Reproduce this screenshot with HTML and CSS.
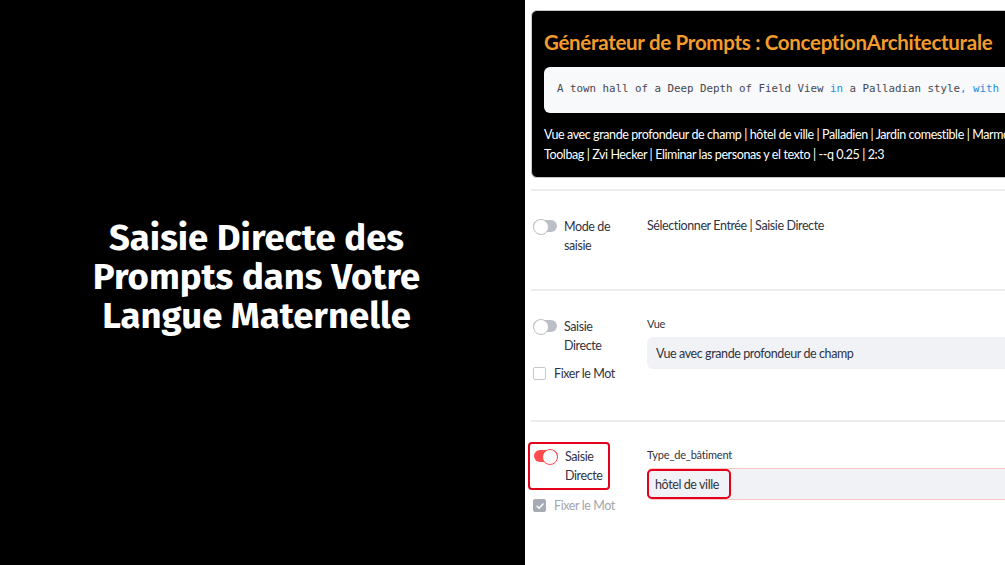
FILE: index.html
```html
<!DOCTYPE html>
<html lang="fr">
<head>
<meta charset="utf-8">
<link rel="stylesheet" href="styles.css">
</head>
<body>
<div class="screen">
  <div class="left">
    <h1 class="promo">Saisie Directe des<br>Prompts dans Votre<br>Langue Maternelle</h1>
  </div>
  <div class="right">
    <div class="content">
      <div class="card">
        <h2 class="title">Générateur de Prompts : ConceptionArchitecturale</h2>
        <div class="code"><code>A town hall of a Deep Depth of Field View <span class="kw">in</span> a Palladian style<span class="kw">,</span> <span class="kw">with</span> an Edible Garden</code></div>
        <p class="summary">Vue avec grande profondeur de champ | hôtel de ville | Palladien | Jardin comestible | Marmoset<br>Toolbag | Zvi Hecker | Eliminar las personas y el texto | --q 0.25 | 2:3</p>
      </div>

      <div class="row row-short">
        <div class="side">
          <div class="toggle-line">
            <span class="toggle"></span>
            <span class="tlabel">Mode de saisie</span>
          </div>
        </div>
        <div class="main">
          <p class="plain">Sélectionner Entrée | Saisie Directe</p>
        </div>
      </div>

      <div class="row">
        <div class="side">
          <div class="toggle-line">
            <span class="toggle"></span>
            <span class="tlabel">Saisie Directe</span>
          </div>
          <div class="check-line">
            <span class="check"></span>
            <span class="clabel">Fixer le Mot</span>
          </div>
        </div>
        <div class="main">
          <div class="flabel">Vue</div>
          <div class="input">Vue avec grande profondeur de champ</div>
        </div>
      </div>

      <div class="row">
        <div class="side">
          <div class="toggle-line hl">
            <span class="toggle on"></span>
            <span class="tlabel">Saisie Directe</span>
          </div>
          <div class="check-line disabled">
            <span class="check checked">
              <svg viewBox="0 0 12 12" width="10" height="10"><path d="M2.5 6.2l2.4 2.4 4.8-5" fill="none" stroke="#fff" stroke-width="1.8" stroke-linecap="round" stroke-linejoin="round"/></svg>
            </span>
            <span class="clabel">Fixer le Mot</span>
          </div>
        </div>
        <div class="main">
          <div class="flabel">Type_de_bâtiment</div>
          <div class="input invalid"><span class="hlbox">hôtel de ville</span></div>
        </div>
      </div>
    </div>
  </div>
</div>
</body>
</html>
```

FILE: styles.css
```css
* { box-sizing: border-box; }
html, body { margin: 0; padding: 0; }
body {
  width: 1005px;
  height: 565px;
  overflow: hidden;
  font-family: Lato, "Noto Sans", sans-serif;
  color: #31333f;
}
.screen {
  display: flex;
  width: 1005px;
  height: 565px;
}
.left {
  width: 525px;
  flex: none;
  background: #000;
  display: flex;
  align-items: center;
  justify-content: center;
  padding-bottom: 10px;
  padding-right: 12px;
}
.promo {
  margin: 0;
  color: #fff;
  font-family: "Fira Sans", "Noto Sans", Lato, sans-serif;
  font-weight: 700;
  font-size: 36.5px;
  line-height: 39px;
  text-align: center;
  letter-spacing: 0;
}
.right {
  flex: 1;
  background: #fff;
  overflow: hidden;
  padding: 10px 0 0 6px;
}
.content {
  width: 760px;
}
.card {
  background: #000;
  border: 1px solid #c8c8c8;
  border-radius: 6px;
  padding: 16px 12px 12px 12px;
  height: 168px;
}
.title {
  margin: 0;
  color: #f39c2b;
  font-size: 20.5px;
  font-weight: 700;
  line-height: 30px;
  letter-spacing: -0.3px;
  white-space: nowrap;
}
.code {
  margin-top: 10px;
  background: #f8f9fb;
  border-radius: 6px;
  height: 46px;
  display: flex;
  align-items: center;
  padding-left: 13px;
  padding-bottom: 3px;
}
.code code {
  font-family: "DejaVu Sans Mono", "Liberation Mono", monospace;
  font-size: 10.8px;
  color: #464852;
  white-space: pre;
}
.kw { color: #1c8ee3; }
.summary {
  margin: 12px 0 0 0;
  color: #fff;
  font-size: 12.5px;
  line-height: 20px;
  letter-spacing: -0.4px;
  white-space: nowrap;
}
.row {
  display: flex;
  border-top: 2px solid #ececef;
  margin-top: 11px;
  height: 131px;
  padding-top: 26px;
}
.row-short {
  height: 100px;
  margin-top: 11px;
}
.row + .row { margin-top: 0; }
.side {
  width: 116px;
  flex: none;
  display: flex;
  flex-direction: column;
  gap: 11px;
}
.toggle-line {
  display: flex;
  align-items: flex-start;
  gap: 7px;
  padding-left: 2px;
}
.toggle {
  width: 24px;
  height: 12px;
  border-radius: 6px;
  background: #bcbfc7;
  position: relative;
  flex: none;
  margin-top: 3px;
}
.toggle::after {
  content: "";
  position: absolute;
  left: 0;
  top: -1px;
  width: 14px;
  height: 14px;
  border-radius: 50%;
  background: #fff;
  border: 1px solid #bcbfc7;
}
.toggle.on { background: #ff4b4b; }
.toggle.on::after {
  left: auto;
  right: 0;
  border-color: #ff4b4b;
}
.tlabel {
  width: 52px;
  font-size: 12.5px;
  line-height: 19px;
  letter-spacing: -0.4px;
}
.hl {
  border: 2.5px solid #e3001b;
  border-radius: 4px;
  margin: -6px 37px 0 -3px;
  padding: 3px 4px 3px 4px;
}
.check-line {
  display: flex;
  align-items: center;
  gap: 8px;
  padding-left: 2px;
}
.check {
  width: 13px;
  height: 13px;
  border: 1px solid #c6c8ce;
  border-radius: 2px;
  display: flex;
  align-items: center;
  justify-content: center;
  flex: none;
}
.check.checked {
  background: #a7abb5;
  border-color: #a7abb5;
}
.clabel {
  font-size: 12.5px;
  letter-spacing: -0.4px;
}
.disabled .clabel { color: #a4a6ad; }
.hl + .check-line { margin-top: -3px; }
.main { flex: 1; }
.plain {
  margin: 0;
  font-size: 12.5px;
  line-height: 18px;
  letter-spacing: -0.4px;
}
.flabel {
  font-size: 11px;
  line-height: 14px;
  margin-bottom: 6px;
  letter-spacing: -0.2px;
}
.input {
  background: #f0f2f6;
  border-radius: 6px;
  height: 32px;
  display: flex;
  align-items: center;
  padding-left: 8px;
  font-size: 12.5px;
  letter-spacing: -0.4px;
  border: 1px solid transparent;
}
.input.invalid {
  border: 1px solid #ffc4c4;
  border-right: none;
  padding-left: 0;
  align-items: stretch;
}
.hlbox {
  border: 2.5px solid #e3001b;
  border-radius: 5px;
  margin: 0 0 0 -1px;
  padding: 0 10px 0 6px;
  display: flex;
  align-items: center;
}
```
